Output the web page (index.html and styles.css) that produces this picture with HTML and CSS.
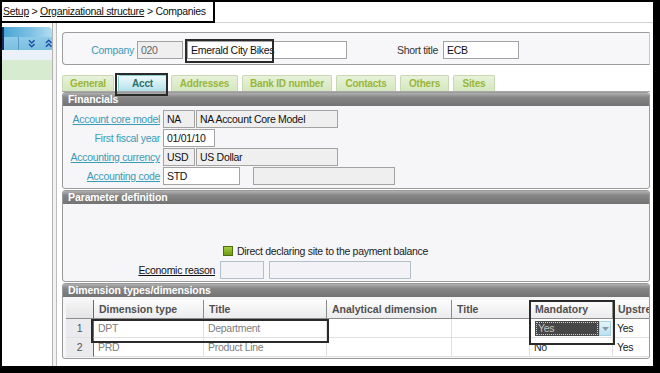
FILE: index.html
```html
<!DOCTYPE html>
<html lang="en">
<head>
<meta charset="utf-8">
<title>Companies</title>
<link rel="stylesheet" href="styles.css">
</head>
<body>
<div class="screen">
  <div class="topbar">
    <div class="crumbs"><span class="u">Setup</span> &gt; <span class="u">Organizational structure</span> &gt; Companies</div>
    <div class="topfill"></div>
  </div>
  <div class="body">
    <aside class="side">
      <div class="side-gap"></div>
      <div class="side-head"></div>
      <div class="side-bar">
        <span class="side-cell"></span>
        <svg class="chev" width="8" height="9" viewBox="0 0 8 9"><polyline points="1,1 4,4 7,1" /><polyline points="1,5 4,8 7,5" /></svg>
        <svg class="chev" width="8" height="9" viewBox="0 0 8 9"><polyline points="1,4 4,1 7,4" /><polyline points="1,8 4,5 7,8" /></svg>
      </div>
      <div class="side-light"></div>
      <div class="side-green"></div>
    </aside>
    <div class="divider"></div>
    <main class="main">
      <div class="company">
        <span class="clabel">Company</span>
        <span class="in ro w46 grey">020</span>
        <span class="in w160 gap4">Emerald City Bikes</span>
        <span class="slabel">Short title</span>
        <span class="in w76">ECB</span>
      </div>
      <div class="tabs">
        <span class="tab t1">General</span>
        <span class="tab t2 active">Acct</span>
        <span class="tab t3">Addresses</span>
        <span class="tab t4">Bank ID number</span>
        <span class="tab t5">Contacts</span>
        <span class="tab t6">Others</span>
        <span class="tab t7">Sites</span>
      </div>
      <section class="box fin">
        <div class="box-head">Financials</div>
        <div class="fin-body">
          <div class="frow"><span class="flabel link">Account core model</span><span class="in ro w32">NA</span><span class="in ro w142 gap1">NA Account Core Model</span></div>
          <div class="frow"><span class="flabel teal">First fiscal year</span><span class="in w52">01/01/10</span></div>
          <div class="frow"><span class="flabel link">Accounting currency</span><span class="in ro w32">USD</span><span class="in ro w142 gap1">US Dollar</span></div>
          <div class="frow"><span class="flabel link">Accounting code</span><span class="in w77">STD</span><span class="in ro w142 gap13"></span></div>
        </div>
      </section>
      <section class="box param">
        <div class="box-head">Parameter definition</div>
        <div class="param-body">
          <div class="check-row"><span class="check"></span><span>Direct declaring site to the payment balance</span></div>
          <div class="econ-row"><span class="elabel">Economic reason</span><span class="in pale w44"></span><span class="in pale w142 gap5"></span></div>
        </div>
      </section>
      <section class="box dim">
        <div class="box-head">Dimension types/dimensions</div>
        <div class="grid">
          <div class="th num"></div>
          <div class="th">Dimension type</div>
          <div class="th">Title</div>
          <div class="th">Analytical dimension</div>
          <div class="th">Title</div>
          <div class="th">Mandatory</div>
          <div class="th">Upstream</div>

          <div class="td num">1</div>
          <div class="td">DPT</div>
          <div class="td">Department</div>
          <div class="td"></div>
          <div class="td"></div>
          <div class="td combo-cell">
            <div class="combo"><span class="combo-field"><span class="combo-focus">Yes</span></span><span class="combo-btn"><svg width="7" height="4" viewBox="0 0 7 4"><polygon points="0,0 7,0 3.5,4" /></svg></span></div>
          </div>
          <div class="td dark">Yes</div>

          <div class="td num">2</div>
          <div class="td">PRD</div>
          <div class="td">Product Line</div>
          <div class="td"></div>
          <div class="td"></div>
          <div class="td dark">No</div>
          <div class="td dark">Yes</div>
        </div>
      </section>
    </main>
    <div class="rspace"></div>
  </div>
  <div class="mark m-name"></div>
  <div class="mark m-acct"></div>
  <div class="mark m-row"></div>
  <div class="mark m-mand"></div>
</div>
</body>
</html>
```

FILE: styles.css
```css
* { box-sizing: border-box; margin: 0; padding: 0; }
html, body { width: 660px; height: 373px; overflow: hidden; background: #000; }
body { font-family: "Liberation Sans", Arial, sans-serif; font-size: 10.5px; letter-spacing: -0.3px; color: #222; }

.screen {
  position: relative;
  width: 660px;
  height: 373px;
  border-style: solid;
  border-color: #000;
  border-width: 2px 7px 7px 2px;
  background: #fff;
  display: flex;
  flex-direction: column;
}

/* top breadcrumb bar */
.topbar { height: 21px; display: flex; flex: none; }
.crumbs {
  width: 213px;
  height: 21px;
  border-right: 2px solid #000;
  border-bottom: 2px solid #000;
  padding: 3px 0 0 1px;
  white-space: nowrap;
  color: #111;
  background: #fff;
  font-size: 10.5px;
}
.u { text-decoration: underline; }
.topfill { flex: 1; border-bottom: 1px solid #d2d2d2; }

.body { flex: 1; display: flex; min-height: 0; }

/* left sidebar */
.side { width: 50px; flex: none; display: flex; flex-direction: column; background: #fff; }
.side-gap { height: 4px; }
.side-head {
  height: 10px;
  border-left: 2px solid #14315c;
  background: linear-gradient(to right, #4aa6d4, #7cc0e4 55%, #b3ddf0);
  border-radius: 0 4px 0 0;
}
.side-bar {
  height: 13px;
  border-left: 2px solid #14315c;
  background: linear-gradient(#8fcbe7, #7bbfe0);
  display: flex;
  align-items: center;
  gap: 9px;
}
.side-cell { width: 16px; height: 13px; border-right: 1px solid #5a98c0; }
.chev { fill: none; stroke: #1c4fa3; stroke-width: 1.5; }
.side-light { height: 10px; background: #eaf1f8; }
.side-green { height: 20px; background: #d7ebd0; }

.divider {
  width: 10px;
  flex: none;
  background: linear-gradient(to right, #b4b4b4 0 1px, #f2f2f2 1px 4px, #bdbdbd 4px 5px, #fff 5px);
}
.rspace { width: 3px; flex: none; }

/* main panel */
.main { width: 588px; flex: none; padding-top: 9px; display: flex; flex-direction: column; }

.in {
  display: inline-block;
  height: 18px;
  border: 1px solid #a3a3a3;
  background: #fff;
  padding: 0 3px;
  line-height: 16px;
  color: #111;
  white-space: nowrap;
  overflow: hidden;
  flex: none;
}
.in.ro { background: #efefef; }
.in.grey { color: #666; }
.in.pale { background: #f3f3f7; border-color: #b4bfcc; }
.w32 { width: 32px; } .w44 { width: 44px; } .w46 { width: 46px; } .w52 { width: 52px; }
.w76 { width: 76px; } .w77 { width: 77px; } .w142 { width: 142px; } .w160 { width: 160px; }
.gap1 { margin-left: 1px; } .gap4 { margin-left: 4px; } .gap5 { margin-left: 5px; } .gap13 { margin-left: 13px; }

.company {
  height: 33px;
  border: 1px solid #9c9c9c;
  border-radius: 4px 0 0 4px;
  border-right-color: #c8c8c8;
  background: #f7f6f9;
  display: flex;
  align-items: flex-start;
  padding-top: 8px;
}
.clabel { width: 71px; text-align: right; margin-right: 3px; color: #3a9bb7; line-height: 18px; }
.slabel { margin-left: 50px; margin-right: 5px; color: #333; line-height: 18px; }

/* tabs */
.tabs {
  margin-top: 10px;
  height: 17px;
  display: flex;
  gap: 4px;
  align-items: flex-end;
  border-bottom: 1px solid #a8a8a8;
}
.tab {
  height: 16px;
  border: 1px solid #c9d7b5;
  border-bottom: none;
  border-radius: 2px 2px 0 0;
  background: linear-gradient(#e8f2da, #d3e7bd);
  color: #9ab63a;
  font-size: 10px;
  letter-spacing: -0.2px;
  font-weight: bold;
  line-height: 15px;
  text-align: center;
  white-space: nowrap;
}
.tab.active { background: linear-gradient(#effafc, #b3e1ec); color: #2b6f6a; border-color: #8cc; }
.t1 { width: 52px; } .t2 { width: 49px; } .t3 { width: 67px; } .t4 { width: 90px; }
.t5 { width: 60px; } .t6 { width: 49px; } .t7 { width: 42px; }

/* section boxes */
.box {
  border: 1px solid #9a9a9a;
  border-radius: 3px;
  background: #f6f5f8;
  overflow: hidden;
  flex: none;
}
.box-head {
  height: 13px;
  background: linear-gradient(#b0b0b0, #858585 35%, #737373);
  color: #fff;
  font-weight: bold;
  font-size: 10.5px;
  letter-spacing: -0.1px;
  line-height: 13px;
  padding-left: 5px;
  white-space: nowrap;
}
.fin { height: 97px; }
.param { height: 92px; margin-top: 1px; }
.dim { height: 76px; margin-top: 1px; }

.fin-body { padding-top: 4px; }
.frow { display: flex; align-items: center; height: 18px; margin-bottom: 1px; }
.flabel { width: 97px; text-align: right; margin-right: 3px; white-space: nowrap; }
.link { color: #3a9bb7; text-decoration: underline; }
.teal { color: #3a9bb7; }

.param-body { padding-top: 42px; }
.check-row { display: flex; align-items: center; gap: 4px; height: 10px; margin-left: 160px; color: #222; white-space: nowrap; }
.check {
  width: 10px; height: 10px; flex: none;
  border: 1px solid #4f6f12;
  background: linear-gradient(#a4cc3c, #6f9a16);
}
.econ-row { display: flex; align-items: center; height: 18px; margin-top: 5px; }
.elabel { width: 152px; text-align: right; margin-right: 5px; text-decoration: underline; color: #111; white-space: nowrap; }

/* table */
.grid {
  margin: 3px 0 0 3px;
  display: grid;
  grid-template-columns: 28px 110px 123px 125px 78px 83px 80px;
  grid-auto-rows: 19px;
  width: 627px;
}
.th {
  background: linear-gradient(#fcfcfc, #ececee);
  border-right: 1px solid #8c8c8c;
  border-bottom: 1px solid #8c8c8c;
  color: #505050;
  font-weight: bold;
  font-size: 10.5px;
  letter-spacing: 0;
  line-height: 18px;
  padding-left: 5px;
  white-space: nowrap;
  overflow: hidden;
}
.td {
  background: #fff;
  border-right: 1px solid #e0e0e0;
  border-bottom: 1px solid #e0e0e0;
  color: #808080;
  line-height: 18px;
  padding-left: 4px;
  white-space: nowrap;
  overflow: hidden;
}
.td.dark { color: #222; }
.num { background: #ebebed; text-align: center; padding-left: 0; border-right: 1px solid #6a6a6a; color: #555; }
.th.num { background: linear-gradient(#f6f6f6, #e4e4e6); }

.combo-cell { padding: 2px 1px 0 5px; }
.combo { display: flex; height: 15px; }
.combo-field { flex: 1; background: #474747; padding: 1px; }
.combo-focus {
  display: block; height: 13px;
  border: 1px dotted #d0d0d0;
  color: #c4c4c4;
  line-height: 11px;
  padding-left: 1px;
}
.combo-btn {
  width: 12px;
  background: linear-gradient(#e4f4fa, #b9e1ee);
  border: 1px solid #a8d0dc;
  display: flex; align-items: center; justify-content: center;
}
.combo-btn svg { fill: #8a9aa4; }

/* annotation frames drawn over the screenshot */
.mark { position: absolute; border: 2px solid #2a2a2a; pointer-events: none; }
.m-name { left: 183px; top: 37px; width: 89px; height: 24px; }
.m-acct { left: 113px; top: 71px; width: 53px; height: 23px; }
.m-row { left: 89px; top: 317px; width: 238px; height: 24px; }
.m-mand { left: 527px; top: 298px; width: 86px; height: 45px; }
```
